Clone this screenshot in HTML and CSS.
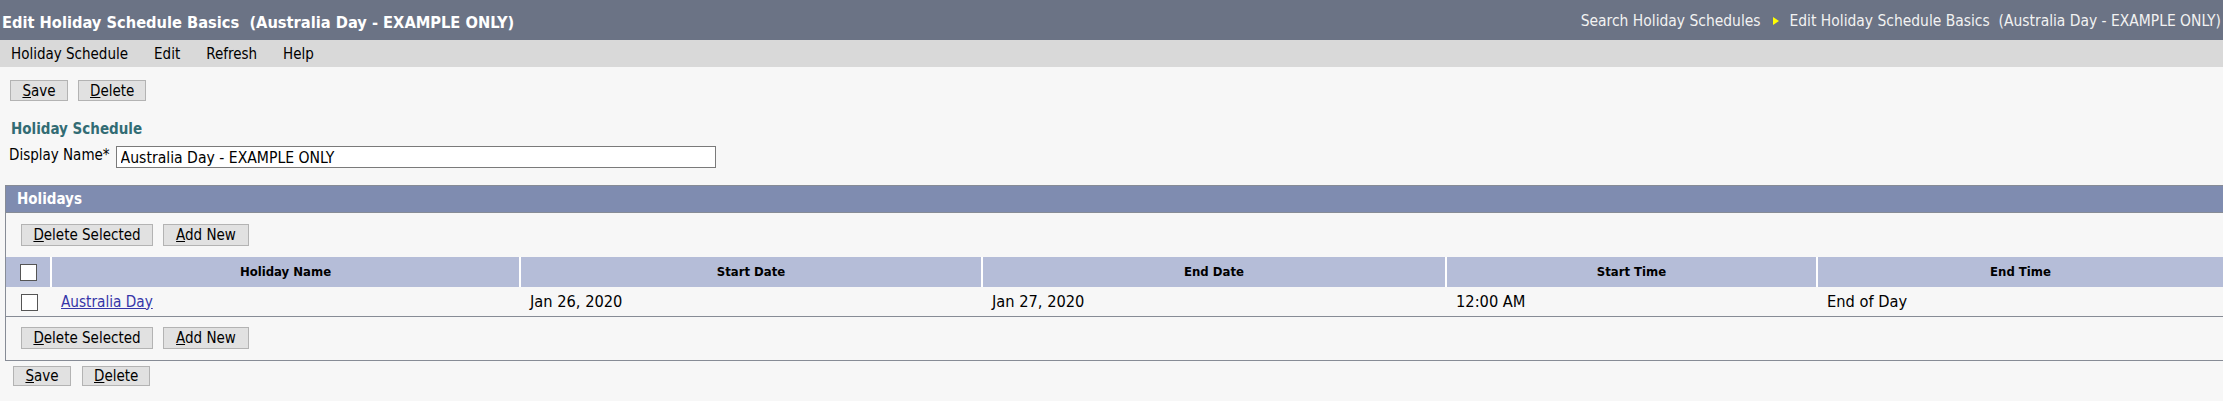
FILE: index.html
```html
<!DOCTYPE html>
<html>
<head>
<meta charset="utf-8">
<link rel="stylesheet" href="styles.css">
</head>
<body>
<div class="topbar">
  <div class="title">Edit Holiday Schedule Basics&nbsp; (Australia Day - EXAMPLE ONLY)</div>
  <div class="crumbs">
    <span class="crumb">Search Holiday Schedules</span>
    <svg class="arrow" width="6" height="8" viewBox="0 0 6 8"><polygon points="0,0 6,4 0,8" fill="#ffff00"/></svg>
    <span class="crumb">Edit Holiday Schedule Basics&nbsp; (Australia Day - EXAMPLE ONLY)</span>
  </div>
</div>
<div class="menubar">
  <span class="menu-item">Holiday Schedule</span>
  <span class="menu-item">Edit</span>
  <span class="menu-item">Refresh</span>
  <span class="menu-item">Help</span>
</div>
<div class="toolbar">
  <button class="btn btn-save"><u>S</u>ave</button>
  <button class="btn btn-delete"><u>D</u>elete</button>
</div>
<div class="section-title">Holiday Schedule</div>
<div class="field-row">
  <label class="field-label">Display Name*</label>
  <input class="field-input" type="text" value="Australia Day - EXAMPLE ONLY">
</div>
<div class="panel">
  <div class="panel-header">Holidays</div>
  <div class="panel-actions">
    <button class="btn btn-tall btn-delsel"><u>D</u>elete Selected</button>
    <button class="btn btn-tall btn-add"><u>A</u>dd New</button>
  </div>
  <table class="grid">
    <colgroup>
      <col class="c-check">
      <col class="c-name">
      <col class="c-sdate">
      <col class="c-edate">
      <col class="c-stime">
      <col class="c-etime">
    </colgroup>
    <thead>
      <tr>
        <th class="th-check"><input type="checkbox" class="cb"></th>
        <th>Holiday Name</th>
        <th>Start Date</th>
        <th>End Date</th>
        <th>Start Time</th>
        <th>End Time</th>
      </tr>
    </thead>
    <tbody>
      <tr>
        <td class="td-check"><input type="checkbox" class="cb"></td>
        <td><a class="link" href="#">Australia Day</a></td>
        <td>Jan 26, 2020</td>
        <td>Jan 27, 2020</td>
        <td>12:00 AM</td>
        <td>End of Day</td>
      </tr>
    </tbody>
  </table>
  <div class="panel-actions panel-actions-bottom">
    <button class="btn btn-tall btn-delsel"><u>D</u>elete Selected</button>
    <button class="btn btn-tall btn-add"><u>A</u>dd New</button>
  </div>
</div>
<div class="toolbar toolbar-bottom">
  <button class="btn btn-save"><u>S</u>ave</button>
  <button class="btn btn-delete"><u>D</u>elete</button>
</div>
</body>
</html>
```

FILE: styles.css
```css
html, body {
  margin: 0;
  padding: 0;
}
body {
  background: #f7f7f7;
  font-family: "DejaVu Sans Condensed", "DejaVu Sans", sans-serif;
  font-stretch: condensed;
  font-size: 15px;
  line-height: 18px;
  color: #000;
  overflow: hidden;
}
.topbar {
  height: 40px;
  background: #6b7385;
  display: flex;
  justify-content: space-between;
  align-items: flex-start;
  white-space: nowrap;
}
.title {
  padding: 14px 0 0 2px;
  font-size: 16.3px;
  font-weight: bold;
  color: #fff;
}
.crumbs {
  padding: 12px 2px 0 0;
  display: flex;
  align-items: center;
  font-size: 15.45px;
  color: #f2f2f2;
}
.arrow {
  margin: 0 11px 0 12px;
}
.menubar {
  height: 27px;
  box-sizing: border-box;
  background: #d9d9d9;
  padding: 5px 0 0 11px;
  display: flex;
  gap: 26px;
}
.toolbar {
  display: flex;
  gap: 10px;
  padding: 13px 0 0 10px;
}
.btn {
  font: inherit;
  font-stretch: condensed;
  height: 21px;
  line-height: 18px;
  padding: 0 11px;
  margin: 0;
  background: #e1e1e1;
  border: 1px solid #b3b3b3;
  color: #000;
  box-sizing: border-box;
}
.btn u {
  text-decoration: underline;
}
.btn-save { width: 58px; }
.btn-delete { width: 68px; }
.btn-tall { height: 22px; }
.btn-delsel { width: 132px; }
.btn-add { width: 86px; }
.section-title {
  margin: 19px 0 0 11px;
  font-weight: bold;
  color: #326c74;
}
.field-row {
  display: flex;
  align-items: flex-start;
  gap: 6px;
  margin: 8px 0 0 9px;
}
.field-label {
  line-height: 18px;
}
.field-input {
  width: 600px;
  height: 22px;
  box-sizing: border-box;
  border: 1px solid #7a7a7a;
  background: #fff;
  padding: 1px 3px 0 4px;
  margin: 0;
  font: inherit;
  font-size: 15.6px;
  font-stretch: condensed;
  color: #000;
}
.panel {
  margin: 17px 0 0 5px;
  border: 1px solid #878c96;
  border-right: none;
}
.panel-header {
  background: #7f8cb0;
  color: #fff;
  font-weight: bold;
  padding: 4px 0 4px 11px;
  border-bottom: 1px solid #878c96;
}
.panel-actions {
  display: flex;
  gap: 10px;
  padding: 11px 0 0 15px;
}
.panel-actions-bottom {
  padding: 10px 0 11px 15px;
}
.grid {
  margin-top: 11px;
  border-collapse: separate;
  border-spacing: 0;
  table-layout: fixed;
  width: 2217px;
}
.c-check { width: 44px; }
.c-name { width: 469px; }
.c-sdate { width: 462px; }
.c-edate { width: 464px; }
.c-stime { width: 371px; }
.c-etime { width: 407px; }
.grid th {
  background: #b5bdd8;
  height: 30px;
  padding: 0;
  font-size: 13px;
  font-weight: bold;
  text-align: center;
  border-left: 2px solid #fff;
  box-sizing: border-box;
}
.grid th.th-check {
  border-left: none;
}
.grid td {
  height: 30px;
  box-sizing: border-box;
  padding: 0 0 0 11px;
  text-align: left;
  font-size: 16.3px;
  border-bottom: 1px solid #878c96;
}
.grid td.td-check {
  padding: 0;
  text-align: center;
}
.cb {
  -webkit-appearance: none;
  appearance: none;
  width: 17px;
  height: 17px;
  margin: 0;
  background: #fff;
  border: 1px solid #555;
  vertical-align: middle;
  box-sizing: border-box;
}
.th-check .cb {
  margin-left: 1px;
}
.td-check .cb {
  margin-left: 2px;
}
.link {
  font-size: 15.2px;
  color: #3535a8;
  text-decoration: underline;
}
.toolbar-bottom {
  padding: 5px 0 0 13px;
  gap: 11px;
}
.toolbar-bottom .btn {
  height: 20px;
}
```
